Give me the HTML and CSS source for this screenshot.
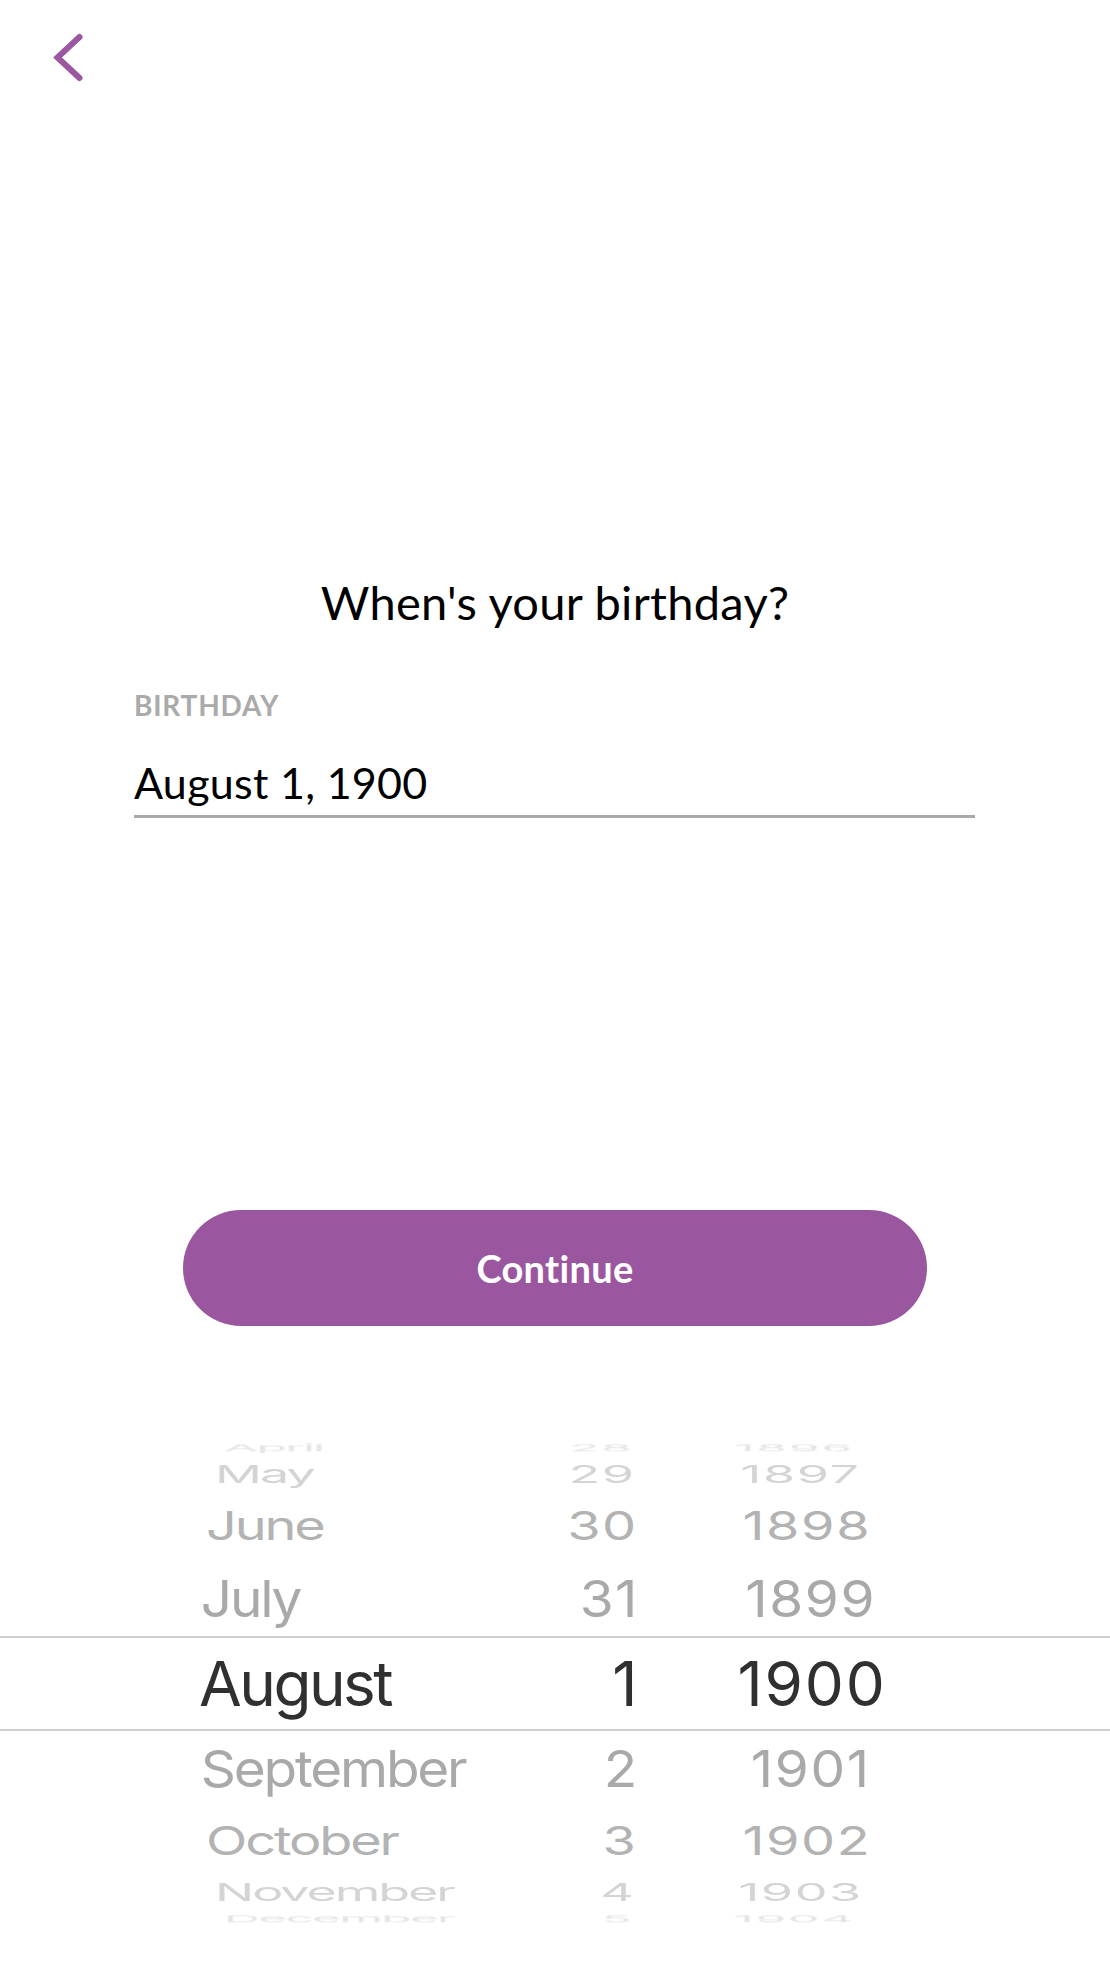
FILE: index.html
```html
<!DOCTYPE html>
<html lang="en">
<head>
<meta charset="utf-8">
<title>Birthday</title>
<link rel="stylesheet" href="styles.css">
</head>
<body>
<div class="screen">
  <header class="topbar">
    <button class="back" aria-label="Back">
      <svg width="34" height="52" viewBox="0 0 34 52" aria-hidden="true">
        <path d="M29.5 5 L7.5 25.5 L29.5 46" fill="none" stroke="#9b58a0" stroke-width="6" stroke-linecap="round" stroke-linejoin="miter"/>
      </svg>
    </button>
  </header>
  <main class="content">
    <h1 class="title">When's your birthday?</h1>
    <div class="field">
      <div class="field-label">BIRTHDAY</div>
      <div class="field-value">August 1, 1900</div>
    </div>
    <button class="continue">Continue</button>
  </main>
  <div class="picker">
    <div class="row r-4"><span class="m">April</span><span class="d">28</span><span class="y">1896</span></div>
    <div class="row r-3"><span class="m">May</span><span class="d">29</span><span class="y">1897</span></div>
    <div class="row r-2"><span class="m">June</span><span class="d">30</span><span class="y">1898</span></div>
    <div class="row r-1"><span class="m">July</span><span class="d">31</span><span class="y">1899</span></div>
    <div class="row r0"><span class="m">August</span><span class="d">1</span><span class="y">1900</span></div>
    <div class="row r1"><span class="m">September</span><span class="d">2</span><span class="y">1901</span></div>
    <div class="row r2"><span class="m">October</span><span class="d">3</span><span class="y">1902</span></div>
    <div class="row r3"><span class="m">November</span><span class="d">4</span><span class="y">1903</span></div>
    <div class="row r4"><span class="m">December</span><span class="d">5</span><span class="y">1904</span></div>
  </div>
</div>
</body>
</html>
```
FILE: styles.css
```css
html, body {
  margin: 0;
  padding: 0;
  background: #ffffff;
}

.screen {
  width: 1110px;
  height: 1974px;
  overflow: hidden;
  background: #ffffff;
}

.topbar {
  height: 84px;
  box-sizing: border-box;
  padding: 32px 0 0 50px;
}

.back {
  display: block;
  width: 34px;
  height: 52px;
  padding: 0;
  border: 0;
  background: none;
}

.back svg {
  display: block;
}

.content {
  display: flex;
  flex-direction: column;
  align-items: center;
}

.title {
  margin: 490px 0 0;
  font-family: Lato, "Open Sans", sans-serif;
  font-weight: 400;
  font-size: 47px;
  line-height: 56px;
  letter-spacing: 0.3px;
  color: #000000;
}

.field {
  align-self: flex-start;
  margin: 59px 0 0 134px;
  width: 841px;
}

.field-label {
  font-family: Lato, "Open Sans", sans-serif;
  font-weight: 700;
  font-size: 28px;
  line-height: 32px;
  letter-spacing: 0.8px;
  color: #aaaaaa;
}

.field-value {
  margin-top: 37px;
  padding-bottom: 7px;
  border-bottom: 3px solid #a9a9a9;
  font-family: Lato, "Open Sans", sans-serif;
  font-weight: 400;
  font-size: 43px;
  line-height: 50px;
  letter-spacing: 0.3px;
  color: #000000;
}

.continue {
  margin-top: 392px;
  width: 744px;
  height: 116px;
  border: 0;
  border-radius: 58px;
  background: #9a57a0;
  color: #ffffff;
  font-family: Lato, "Open Sans", sans-serif;
  font-weight: 700;
  font-size: 38px;
  letter-spacing: 0.3px;
  padding: 0;
}

/* Wheel picker */
.picker {
  margin-top: 112px;
  height: 491px;
  overflow: hidden;
  font-family: Inter, "Liberation Sans", sans-serif;
  font-size: 62px;
  line-height: 62px;
}

.row {
  display: flex;
  align-items: center;
  width: 1110px;
  transform-origin: 555px 50%;
  white-space: nowrap;
}

.m, .d, .y {
  display: block;
  flex: none;
}

.m {
  margin-left: 199px;
  width: 340px;
  text-align: left;
  letter-spacing: -2.5px;
  transform-origin: 0 50%;
}

.d {
  width: 100px;
  text-align: right;
  letter-spacing: 1.5px;
  transform-origin: 100% 50%;
}

.y {
  margin-left: 92px;
  width: 162px;
  text-align: center;
  letter-spacing: 1.8px;
  transform-origin: 50% 50%;
}

.r0 {
  box-sizing: border-box;
  height: 95px;
  border-top: 2px solid #cfcfcf;
  border-bottom: 2px solid #cfcfcf;
  color: #303030;
}

.r-1, .r1 {
  height: 75px;
  color: #a9a9a9;
  transform: scale(0.995, 0.82);
}
.r-1 span, .r1 span { transform: scaleX(0.89); }

.r-2, .r2 {
  height: 70px;
  color: #b3b3b3;
  transform: scale(0.98, 0.64);
}
.r-2 span, .r2 span { transform: scaleX(0.89); }

.r-3, .r3 {
  height: 33px;
  color: #d4d4d4;
  transform: scale(0.955, 0.39);
}
.r-3 span, .r3 span { transform: scaleX(0.88); }

.r-4, .r4 {
  height: 20px;
  color: #e5e5e5;
  transform: scale(0.93, 0.15);
}
.r-4 span, .r4 span { transform: scaleX(0.87); }
```
